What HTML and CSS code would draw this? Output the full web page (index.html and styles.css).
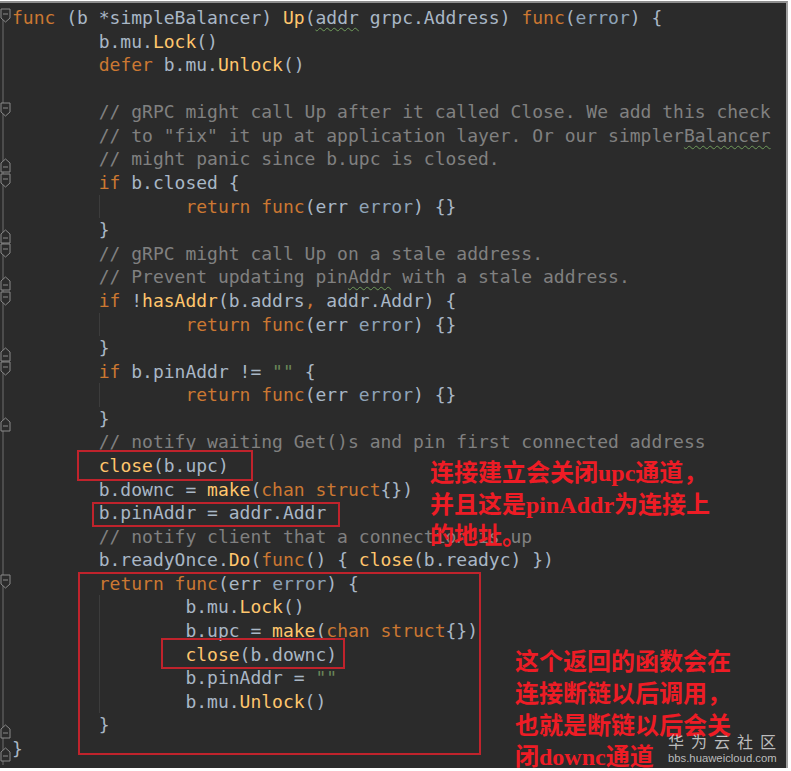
FILE: index.html
```html
<!DOCTYPE html>
<html lang="zh-CN">
<head>
<meta charset="utf-8">
<title>simpleBalancer Up</title>
<link rel="stylesheet" href="styles.css">
</head>
<body>
<div class="editor">
  <div class="gutter">
    <svg class="folds" width="12" height="765" viewBox="0 0 12 765">
      <line x1="3" y1="6" x2="3" y2="762" class="fold-line"/>
      <!-- start markers -->
      <path class="fm" d="M1 6 H10 V15 L5.5 19 L1 15 Z M3 11 H8"/>
      <path class="fm" d="M1 100 H10 V109 L5.5 113 L1 109 Z M3 105 H8"/>
      <path class="fm" d="M1 171 H10 V180 L5.5 184 L1 180 Z M3 176 H8"/>
      <path class="fm" d="M1 241 H10 V250 L5.5 254 L1 250 Z M3 246 H8"/>
      <path class="fm" d="M1 289 H10 V298 L5.5 302 L1 298 Z M3 294 H8"/>
      <path class="fm" d="M1 359 H10 V368 L5.5 372 L1 368 Z M3 364 H8"/>
      <path class="fm" d="M1 572 H10 V581 L5.5 585 L1 581 Z M3 577 H8"/>
      <!-- end markers -->
      <path class="fm" d="M1 169 H10 V160 L5.5 156 L1 160 Z M3 164 H8"/>
      <path class="fm" d="M1 240 H10 V231 L5.5 227 L1 231 Z M3 235 H8"/>
      <path class="fm" d="M1 287 H10 V278 L5.5 274 L1 278 Z M3 282 H8"/>
      <path class="fm" d="M1 358 H10 V349 L5.5 345 L1 349 Z M3 353 H8"/>
      <path class="fm" d="M1 428 H10 V419 L5.5 415 L1 419 Z M3 423 H8"/>
      <path class="fm" d="M1 735 H10 V726 L5.5 722 L1 726 Z M3 730 H8"/>
      <path class="fm" d="M1 758 H10 V749 L5.5 745 L1 749 Z M3 753 H8"/>
    </svg>
  </div>
  <div class="code">
<div class="ln"><span class="k">func</span> (b *simpleBalancer) <span class="f">Up</span>(<span class="u">addr</span> grpc.Address) <span class="k">func</span>(<span class="t">error</span>) {</div>
<div class="ln">        b.mu.<span class="f">Lock</span>()</div>
<div class="ln">        <span class="k">defer</span> b.mu.<span class="f">Unlock</span>()</div>
<div class="ln"> </div>
<div class="ln">        <span class="c">// gRPC might call Up after it called Close. We add this check</span></div>
<div class="ln">        <span class="c">// to "fix" it up at application layer. Or our simpler<span class="u">Balancer</span></span></div>
<div class="ln">        <span class="c">// might panic since b.upc is closed.</span></div>
<div class="ln">        <span class="k">if</span> b.closed {</div>
<div class="ln guide">                <span class="k">return</span> <span class="k">func</span>(err <span class="t">error</span>) {}</div>
<div class="ln">        }</div>
<div class="ln">        <span class="c">// gRPC might call Up on a stale address.</span></div>
<div class="ln">        <span class="c">// Prevent updating pin<span class="u">Addr</span> with a stale address.</span></div>
<div class="ln">        <span class="k">if</span> !<span class="f">hasAddr</span>(b.addrs<span class="k">,</span> addr.Addr) {</div>
<div class="ln guide">                <span class="k">return</span> <span class="k">func</span>(err <span class="t">error</span>) {}</div>
<div class="ln">        }</div>
<div class="ln">        <span class="k">if</span> b.pinAddr != <span class="s">""</span> {</div>
<div class="ln guide">                <span class="k">return</span> <span class="k">func</span>(err <span class="t">error</span>) {}</div>
<div class="ln">        }</div>
<div class="ln">        <span class="c">// notify waiting Get()s and pin first connected address</span></div>
<div class="ln">        <span class="f">close</span>(b.upc)</div>
<div class="ln">        b.downc = <span class="f">make</span>(<span class="k">chan struct</span>{})</div>
<div class="ln">        b.pinAddr = addr.Addr</div>
<div class="ln">        <span class="c">// notify client that a connection is up</span></div>
<div class="ln">        b.readyOnce.<span class="f">Do</span>(<span class="k">func</span>() { <span class="f">close</span>(b.readyc) })</div>
<div class="ln">        <span class="k">return</span> <span class="k">func</span>(err <span class="t">error</span>) {</div>
<div class="ln guide">                b.mu.<span class="f">Lock</span>()</div>
<div class="ln guide">                b.upc = <span class="f">make</span>(<span class="k">chan struct</span>{})</div>
<div class="ln guide">                <span class="f">close</span>(b.downc)</div>
<div class="ln guide">                b.pinAddr = <span class="s">""</span></div>
<div class="ln guide">                b.mu.<span class="f">Unlock</span>()</div>
<div class="ln">        }</div>
<div class="ln">}</div>
  </div>

  <div class="box box-upc"></div>
  <div class="box box-pin"></div>
  <div class="box box-ret"></div>
  <div class="box box-downc"></div>

  <div class="note note-1">连接建立会关闭upc通道，<br>并且这是pinAddr为连接上<br>的地址。</div>
  <div class="note note-2">这个返回的函数会在<br>连接断链以后调用，<br>也就是断链以后会关<br>闭downc通道</div>

  <div class="watermark">
    <div class="wm-title">华为云社区</div>
    <div class="wm-url">bbs.huaweicloud.com</div>
  </div>
</div>
</body>
</html>
```

FILE: styles.css
```css
html, body {
  margin: 0;
  padding: 0;
  background: #ffffff;
}

body {
  padding-top: 1px;
  width: 791px;
  height: 770px;
  overflow: hidden;
}

.editor {
  position: relative;
  box-sizing: border-box;
  width: 788px;
  height: 767px;
  background: #2b2b2b;
  border-top: 2px solid #8f8f8f;
  border-right: 2px solid #a0a0a0;
  display: flex;
  overflow: hidden;
}

.gutter {
  width: 12px;
  flex: none;
}

.folds {
  display: block;
}

.fold-line {
  stroke: #6e6e6e;
  stroke-width: 1;
}

.fm {
  fill: #2b2b2b;
  stroke: #8a8a8a;
  stroke-width: 1;
}

.code {
  flex: 1;
  padding-top: 3px;
  font-family: "DejaVu Sans Mono", "Liberation Mono", monospace;
  font-size: 18px;
  line-height: 23.58px;
  color: #a9b7c6;
}

.ln {
  height: 23.58px;
  position: relative;
  white-space: pre;
}

.guide::before {
  content: "";
  position: absolute;
  left: 87px;
  top: 0;
  bottom: 0;
  width: 1px;
  background: #3c3c3c;
}

.k { color: #cc7832; }
.f { color: #ffc66d; }
.c { color: #808080; }
.s { color: #6a8759; }
.t { color: #8fa3b8; }
.u {
  text-decoration: underline wavy #6f9b5a;
  text-decoration-thickness: 1px;
  text-underline-offset: 3px;
}

.box {
  position: absolute;
  box-sizing: border-box;
  border: 2px solid #c0232c;
}

.box-upc   { left: 77px;  top: 447px; width: 176px; height: 31px; }
.box-pin   { left: 92px;  top: 499px; width: 248px; height: 25px; }
.box-ret   { left: 78px;  top: 569px; width: 403px; height: 183px; }
.box-downc { left: 161px; top: 635px; width: 184px; height: 31px; }

.note {
  position: absolute;
  font-family: "Liberation Serif", "Noto Sans CJK SC", serif;
  font-weight: bold;
  font-size: 24px;
  color: #ee1c25;
  white-space: nowrap;
}

.note-1 {
  left: 430px;
  top: 455px;
  line-height: 31.5px;
}

.note-2 {
  left: 515px;
  top: 644px;
  line-height: 31.8px;
}

.watermark {
  position: absolute;
  left: 668px;
  top: 728px;
  color: rgba(215, 215, 215, 0.85);
}

.wm-title {
  font-family: "Noto Sans CJK SC", sans-serif;
  font-size: 16px;
  line-height: 20px;
  letter-spacing: 7px;
}

.wm-url {
  font-family: "Liberation Sans", sans-serif;
  font-size: 11.3px;
  line-height: 14px;
}
```
